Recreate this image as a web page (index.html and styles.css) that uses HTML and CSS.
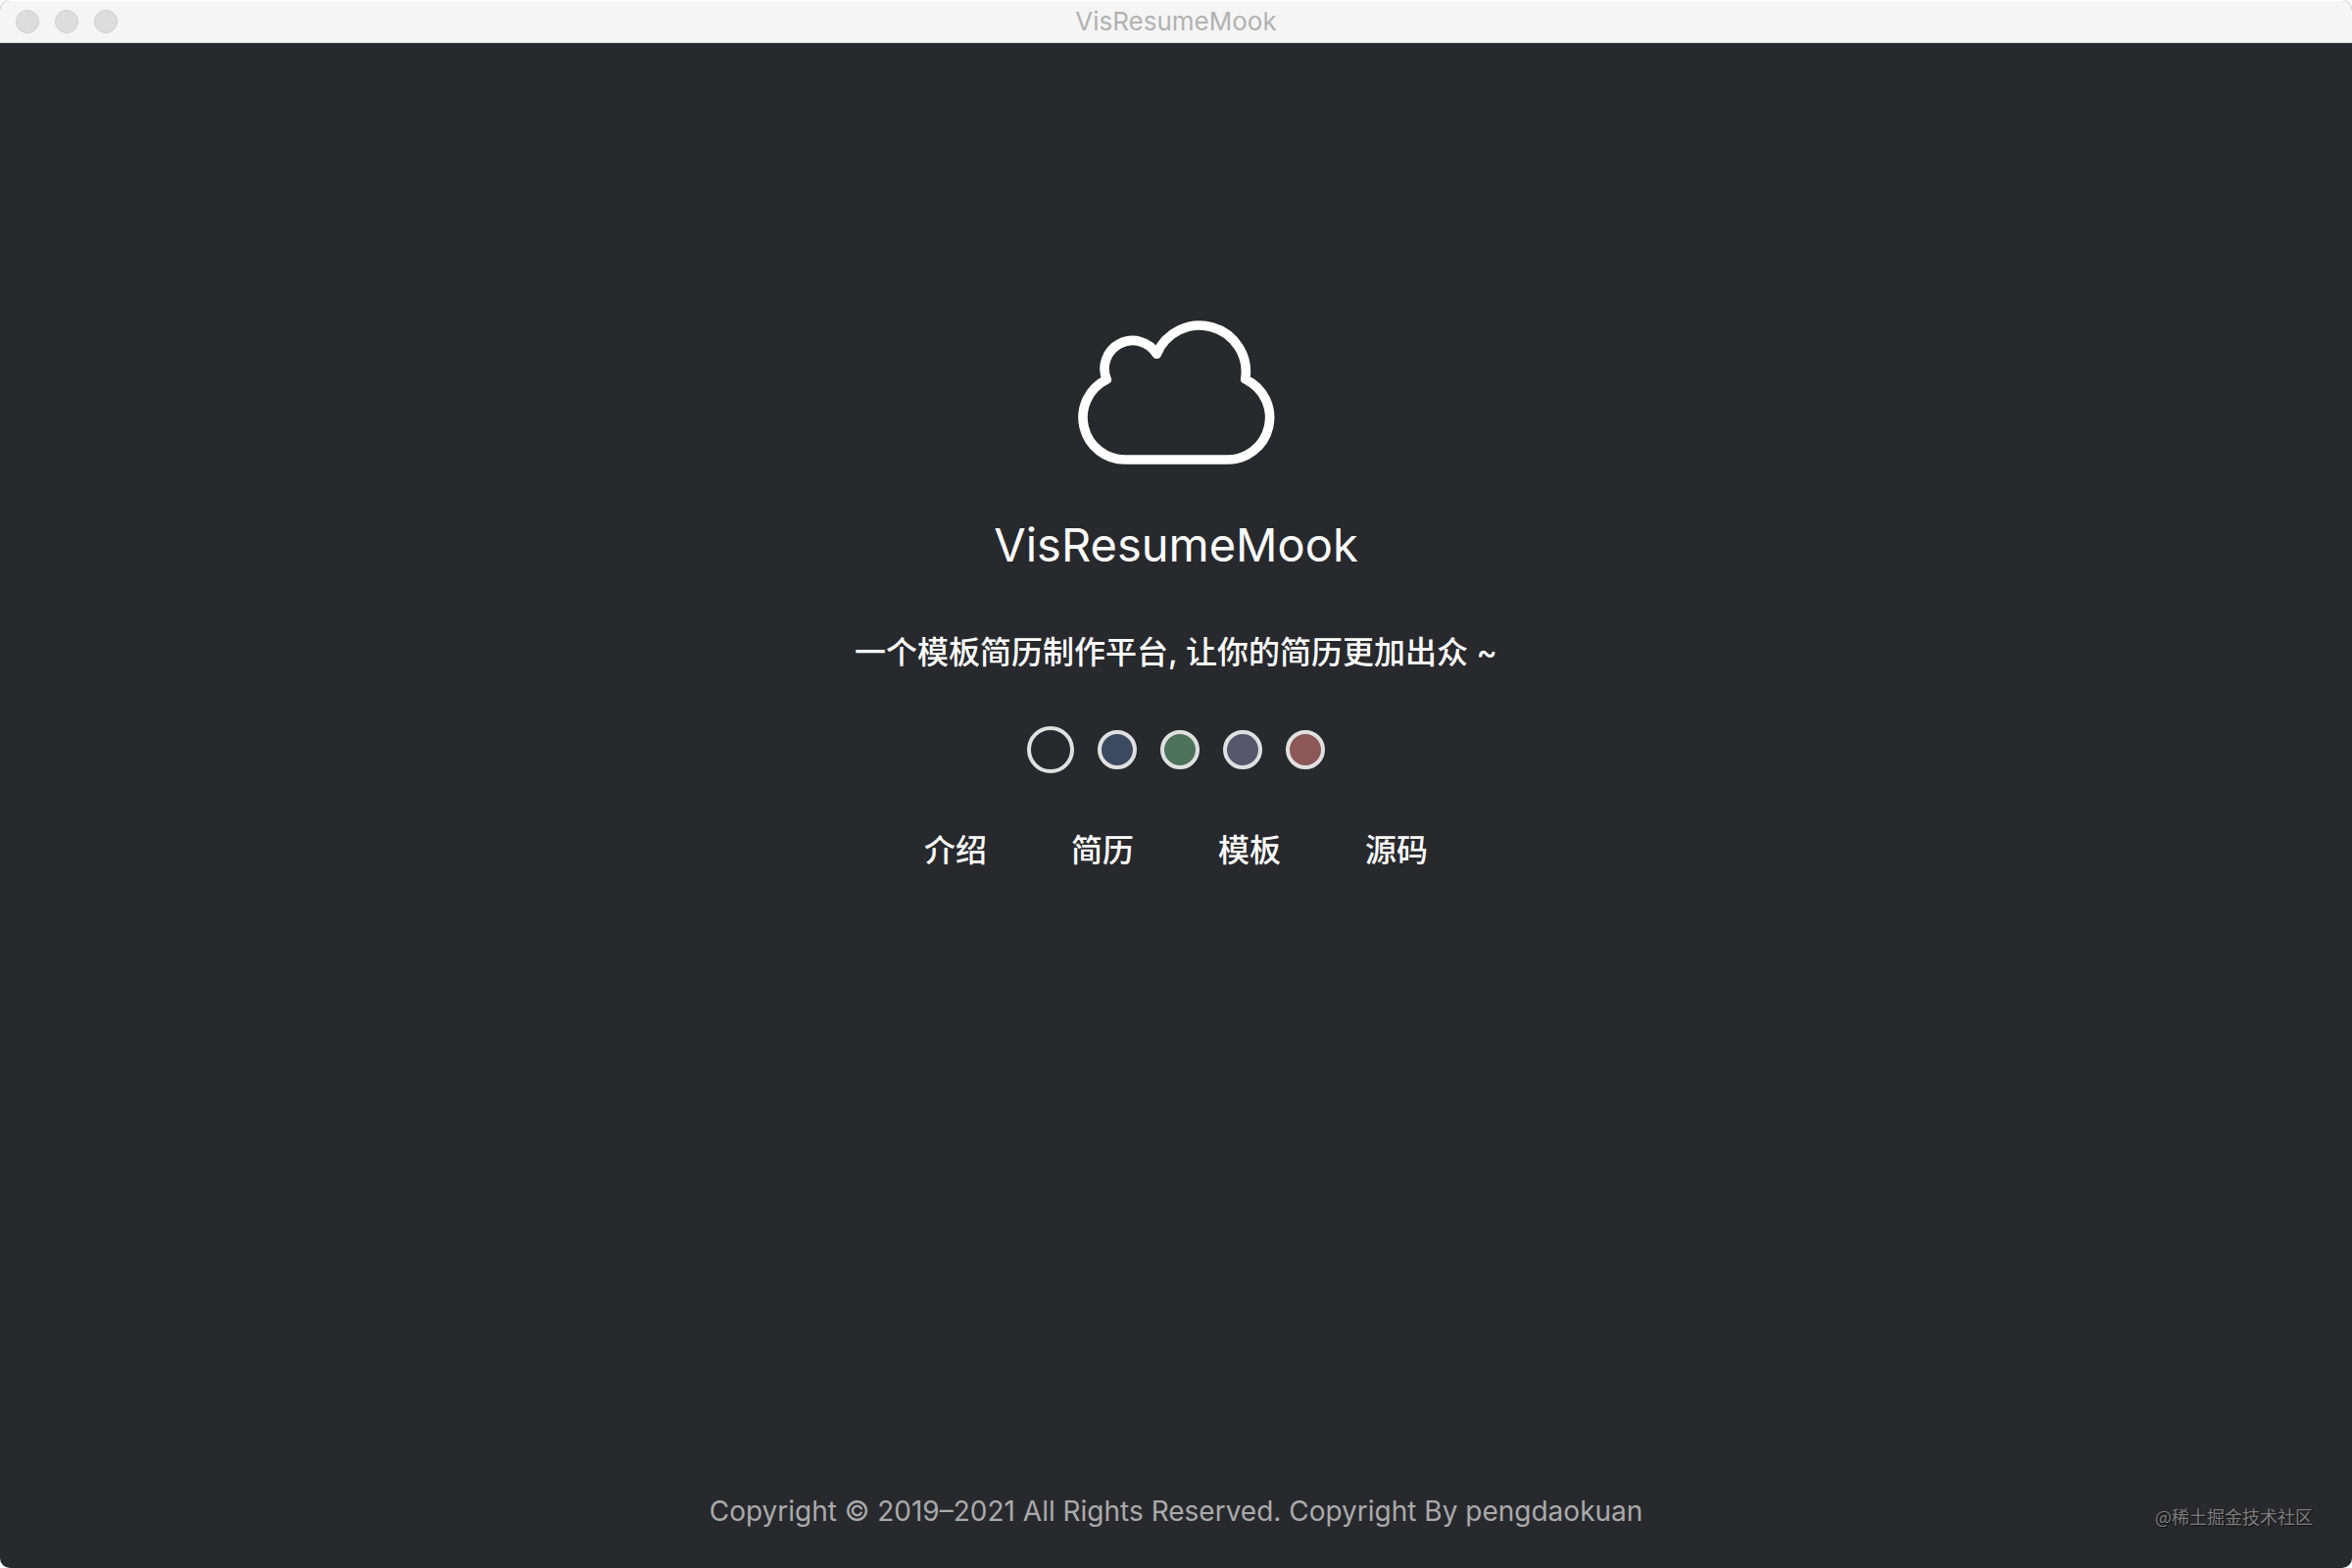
FILE: index.html
```html
<!DOCTYPE html>
<html lang="zh-CN">
<head>
<meta charset="utf-8">
<title>VisResumeMook</title>
<link rel="stylesheet" href="styles.css">
</head>
<body>
<div class="window">
  <header class="titlebar">
    <div class="controls">
      <button class="control" type="button" aria-label="关闭"></button>
      <button class="control" type="button" aria-label="最小化"></button>
      <button class="control" type="button" aria-label="缩放"></button>
    </div>
    <span class="window-title">VisResumeMook</span>
  </header>
  <main class="content">
    <svg class="logo" viewBox="0 0 240 180" aria-hidden="true">
      <path d="M69 160A43 43 0 0 1 49.3 78.3A28.7 28.7 0 0 1 100.3 52.3A47.3 47.3 0 0 1 190.7 78A43 43 0 0 1 171.5 160Z" fill="none" stroke="#fff" stroke-width="9.6" stroke-linejoin="round"/>
    </svg>
    <h1 class="heading">VisResumeMook</h1>
    <p class="tagline">一个模板简历制作平台, 让你的简历更加出众 ~</p>
    <div class="themes" role="radiogroup" aria-label="主题">
      <input class="theme theme-dark" type="radio" name="theme" aria-label="深色" checked>
      <input class="theme theme-blue" type="radio" name="theme" aria-label="蓝色">
      <input class="theme theme-green" type="radio" name="theme" aria-label="绿色">
      <input class="theme theme-purple" type="radio" name="theme" aria-label="紫色">
      <input class="theme theme-red" type="radio" name="theme" aria-label="红色">
    </div>
    <nav class="menu">
      <a class="link" href="#intro">介绍</a>
      <a class="link" href="#resume">简历</a>
      <a class="link" href="#template">模板</a>
      <a class="link" href="#source">源码</a>
    </nav>
  </main>
  <footer class="footer">Copyright © 2019–2021 All Rights Reserved. Copyright By pengdaokuan</footer>
  <span class="watermark">@稀土掘金技术社区</span>
</div>
</body>
</html>
```
FILE: styles.css
```css
* {
  box-sizing: border-box;
}

body {
  margin: 0;
  background: #fff;
  font-family: Inter, "Noto Sans CJK SC", sans-serif;
}

.window {
  position: relative;
  display: flex;
  flex-direction: column;
  min-height: 100vh;
  overflow: hidden;
  border-radius: 10px;
  background: #28292d;
  color: #fff;
}

.titlebar {
  display: grid;
  grid-template-columns: 1fr auto 1fr;
  align-items: center;
  height: 44px;
  padding: 0 16px;
  border-top: 1px solid #fff;
  border-bottom: 1px solid #d3d5d5;
  background: #f5f5f5;
}

.controls {
  display: flex;
  gap: 16px;
}

.control {
  width: 24px;
  height: 24px;
  padding: 0;
  border: 1px solid #cecece;
  border-radius: 50%;
  background: #dddddd;
}

.window-title {
  color: #b2b2b2;
  font-size: 26px;
  line-height: 32px;
}

.content {
  display: flex;
  flex: 1;
  flex-direction: column;
  align-items: center;
  padding-top: 265px;
}

.logo {
  width: 240px;
  height: 180px;
}

.heading {
  margin: 35px 0 0;
  font-size: 47px;
  font-weight: 400;
  line-height: 64px;
}

.tagline {
  margin: 54px 0 0;
  font-size: 32px;
  font-weight: 500;
  line-height: 48px;
}

.themes {
  display: flex;
  align-items: center;
  gap: 24px;
  margin-top: 51px;
}

.theme {
  width: 40px;
  height: 40px;
  margin: 0;
  appearance: none;
  border: 4px solid #e0e0e0;
  border-radius: 50%;
}

.theme:checked {
  width: 48px;
  height: 48px;
}

.theme-dark {
  background: #28292d;
}

.theme-blue {
  background: #3b4a60;
}

.theme-green {
  background: #4e735c;
}

.theme-purple {
  background: #57566b;
}

.theme-red {
  background: #8d5757;
}

.menu {
  display: flex;
  gap: 86px;
  margin-top: 55px;
}

.link {
  color: #fff;
  font-size: 32px;
  font-weight: 500;
  line-height: 48px;
  text-decoration: none;
}

.footer {
  padding-bottom: 38px;
  color: #aaaaab;
  font-size: 28px;
  line-height: 40px;
  text-align: center;
}

.watermark {
  position: absolute;
  right: 40px;
  bottom: 39px;
  color: #7c7c7e;
  font-family: "Noto Sans CJK SC", sans-serif;
  font-size: 18px;
  line-height: 28px;
  text-shadow: 1px 1px 1px #111;
}
```
